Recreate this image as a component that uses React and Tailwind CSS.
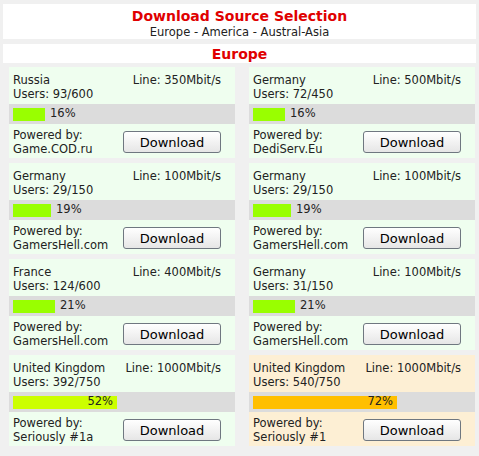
const servers = [
  { country: "Russia", line: "350Mbit/s", users: "93/600", pct: 16, by: "Game.COD.ru" },
  { country: "Germany", line: "500Mbit/s", users: "72/450", pct: 16, by: "DediServ.Eu" },
  { country: "Germany", line: "100Mbit/s", users: "29/150", pct: 19, by: "GamersHell.com" },
  { country: "Germany", line: "100Mbit/s", users: "29/150", pct: 19, by: "GamersHell.com" },
  { country: "France", line: "400Mbit/s", users: "124/600", pct: 21, by: "GamersHell.com" },
  { country: "Germany", line: "100Mbit/s", users: "31/150", pct: 21, by: "GamersHell.com" },
  { country: "United Kingdom", line: "1000Mbit/s", users: "392/750", pct: 52, by: "Seriously #1a" },
  { country: "United Kingdom", line: "1000Mbit/s", users: "540/750", pct: 72, by: "Seriously #1", busy: true },
];

function LoadBar({ pct }) {
  // low load: green bar with label after it; higher load: label sits inside the bar
  const inside = pct >= 50;
  const color = pct >= 70 ? "bg-[#ffbf00]" : pct >= 50 ? "bg-[#ccff00]" : "bg-[#99ff00]";
  return (
    <div className="bg-[#dcdcdc] h-[20px] pl-[4px] flex items-center">
      <div className="w-[200px] flex items-center">
        <div
          className={`${color} h-[13px] flex items-center justify-end`}
          style={{ width: `${pct * 2}px` }}
        >
          {inside && <span className="pr-[4px] leading-none">{pct}%</span>}
        </div>
        {!inside && <span className="pl-[5px] leading-none">{pct}%</span>}
      </div>
    </div>
  );
}

function ServerCard({ s }) {
  return (
    <div className={`${s.busy ? "bg-[#fdefd4]" : "bg-[#effeef]"} h-[91px] flex flex-col`}>
      <div className="flex justify-between pl-[4px] pr-[14px] pt-[6px] leading-[14px]">
        <div>
          <div>{s.country}</div>
          <div>Users: {s.users}</div>
        </div>
        <div>Line: {s.line}</div>
      </div>
      <div className="mt-[3px]">
        <LoadBar pct={s.pct} />
      </div>
      <div className="flex justify-between items-center pl-[4px] pr-[14px] pt-[4px] leading-[14px]">
        <div>
          <div>Powered by:</div>
          <div>{s.by}</div>
        </div>
        <button className="w-[98px] h-[22px] rounded-[3px] border border-[#6f7780] bg-gradient-to-b from-white to-[#e6e6e6] text-[13px] text-black leading-none">
          Download
        </button>
      </div>
    </div>
  );
}

export default function App() {
  return (
    <div
      className="w-[479px] h-[456px] bg-[#f0f0f0] pt-[4px] px-[3px] text-[11.5px] text-[#222]"
      style={{ fontFamily: '"DejaVu Sans", Verdana, sans-serif' }}
    >
      <div className="bg-white h-[35px] flex flex-col items-center pt-[4px]">
        <div className="text-[14px] font-bold text-[#e00000] leading-[17px]">
          Download Source Selection
        </div>
        <div className="leading-[14px]">Europe - America - Austral-Asia</div>
      </div>
      <div className="bg-white h-[19px] mt-[5px] flex justify-center items-center">
        <div className="text-[14px] font-bold text-[#e00000] leading-none">Europe</div>
      </div>
      <div className="grid grid-cols-2 gap-x-[14px] gap-y-[5px] pl-[6px] pr-[1px] mt-[4px]">
        {servers.map((s, i) => (
          <ServerCard key={i} s={s} />
        ))}
      </div>
    </div>
  );
}
